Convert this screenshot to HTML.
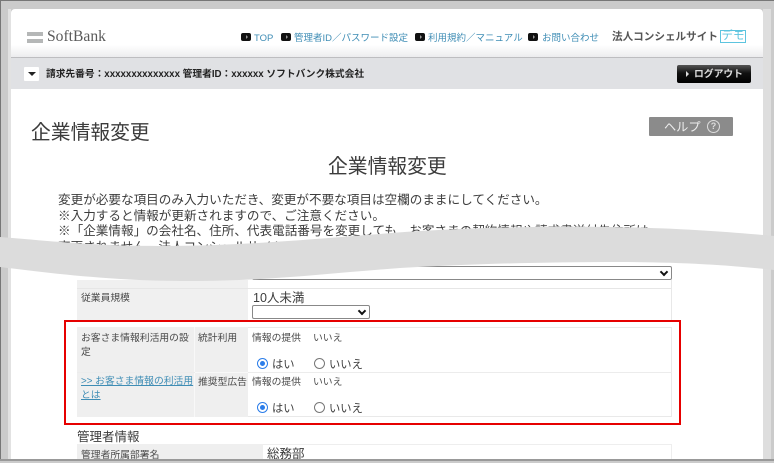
<!DOCTYPE html>
<html lang="ja"><head><meta charset="utf-8"><style>
html,body{margin:0;padding:0}
body{position:relative;width:774px;height:461px;overflow:hidden;background:#cbcbcb;font-family:"Liberation Sans","Noto Sans CJK JP",sans-serif;color:#333}
div,a,span.t{position:absolute;white-space:nowrap}
.nav{top:32px;font-size:9.5px;line-height:14px;color:#3f8db5}
.bul{top:33px;width:10px;height:8px;background:#111;border-radius:2px}
.bul:after{content:"";position:absolute;left:5px;top:2px;border-left:2px solid #999;border-top:2px solid transparent;border-bottom:2px solid transparent}
.p{left:58px;font-size:12.6px;line-height:16px;color:#3c3c3c}
.l{font-size:9.8px;line-height:14px;color:#4a4a4a}
.sel{background:#fff;border:1px solid #888;border-radius:2px;box-sizing:border-box}
.sel:after{content:"";position:absolute;right:4px;top:2px;width:4px;height:4px;border-right:2px solid #111;border-bottom:2px solid #111;transform:rotate(45deg)}
.rad{width:11px;height:11px;border-radius:50%;box-sizing:border-box}
.on{border:1.5px solid #2b7de9;background:#fff}
.on:after{content:"";position:absolute;left:1.5px;top:1.5px;width:5px;height:5px;border-radius:50%;background:#2b7de9}
.off{border:1px solid #777;background:#fff}
.r{font-size:11.3px;line-height:14px;color:#3c3c3c}
</style></head><body>
<div style="left:0;top:0;width:774px;height:1px;background:#777"></div>
<div style="left:0;top:0;width:1px;height:461px;background:#777"></div>
<div style="left:8px;top:9px;width:3px;height:452px;background:#e2e2e2"></div>
<div style="left:763px;top:9px;width:8px;height:452px;background:#dedede"></div>
<div style="left:11px;top:9px;width:752px;height:452px;background:#fff;border-radius:4px 4px 0 0"></div>
<div style="left:11px;top:45px;width:752px;height:12px;background:linear-gradient(#fff,#ececee)"></div>
<div style="left:11px;top:57px;width:752px;height:1px;background:#bdbdc0"></div>
<div style="left:11px;top:58px;width:752px;height:31px;background:#e0e1e4"></div>

<div style="left:27px;top:32px;width:16px;height:4px;background:#b5b7b7"></div>
<div style="left:27px;top:39px;width:16px;height:4px;background:#b5b7b7"></div>
<div style="left:47px;top:27px;font-family:'Liberation Serif',serif;font-size:15.6px;line-height:20px;color:#5a5a5a">SoftBank</div>

<div class="bul" style="left:241px"></div><div class="nav" style="left:254px">TOP</div>
<div class="bul" style="left:281px"></div><div class="nav" style="left:294px">管理者ID／パスワード設定</div>
<div class="bul" style="left:415px"></div><div class="nav" style="left:428px">利用規約／マニュアル</div>
<div class="bul" style="left:528px"></div><div class="nav" style="left:542px">お問い合わせ</div>
<div style="left:612px;top:30px;font-size:10.6px;line-height:15px;font-weight:700;color:#555">法人コンシェルサイト</div>
<div style="left:720px;top:30px;width:26px;height:13px;box-sizing:border-box;border:1.5px solid #5cc4df;font-size:11.5px;line-height:10px;text-align:center;color:#5cc4df">デモ</div>

<div style="left:24px;top:67px;width:15px;height:14px;background:#fff;border-radius:1px"></div>
<div style="left:28px;top:72px;border-top:4px solid #222;border-left:4px solid transparent;border-right:4px solid transparent"></div>
<div style="left:46px;top:68px;font-size:9.72px;line-height:14px;font-weight:700;color:#222">請求先番号：xxxxxxxxxxxxxx 管理者ID：xxxxxx ソフトバンク株式会社</div>
<div style="left:677px;top:65px;width:74px;height:18px;border-radius:2px;background:linear-gradient(#555,#111 45%,#000)"></div>
<div style="left:686px;top:71px;border-left:3px solid #ddd;border-top:3px solid transparent;border-bottom:3px solid transparent"></div>
<div style="left:694px;top:68px;font-size:9.8px;line-height:14px;font-weight:700;color:#ddd">ログアウト</div>

<div style="left:31px;top:119px;font-size:19.8px;line-height:28px;color:#3c3c3c">企業情報変更</div>
<div style="left:649px;top:117px;width:84px;height:19px;background:#8b8b8b;border-radius:1px"></div>
<div style="left:664px;top:120px;font-size:12.2px;line-height:15px;color:#eee">ヘルプ</div>
<div style="left:707px;top:120px;width:13px;height:13px;box-sizing:border-box;border:1.5px solid #ddd;border-radius:50%;font-size:9px;line-height:10px;font-weight:700;text-align:center;color:#ddd">?</div>

<div style="left:328px;top:153px;font-size:19.8px;line-height:28px;color:#3c3c3c">企業情報変更</div>
<div class="p" style="top:192px">変更が必要な項目のみ入力いただき、変更が不要な項目は空欄のままにしてください。</div>
<div class="p" style="top:208px">※入力すると情報が更新されますので、ご注意ください。</div>
<div class="p" style="top:223px">※「企業情報」の会社名、住所、代表電話番号を変更しても、お客さまの契約情報や請求書送付先住所は</div>
<div class="p" style="top:239px">変更されません。法人コンシェルサイトから</div>

<!-- table top -->
<div style="left:77px;top:280px;width:171px;height:40px;background:#f0f0f0"></div>
<div style="left:77px;top:288px;width:595px;height:1px;background:#e6e6e6"></div>
<div style="left:671px;top:280px;width:1px;height:40px;background:#e8e8e8"></div>
<div class="sel" style="left:252px;top:266px;width:420px;height:14px"></div>
<div class="l" style="left:81px;top:292px">従業員規模</div>
<div style="left:253px;top:290px;font-size:12.5px;line-height:16px;color:#3c3c3c">10人未満</div>
<div class="sel" style="left:252px;top:305px;width:118px;height:14px"></div>

<!-- red section -->
<div style="left:77px;top:327px;width:595px;height:90px;box-sizing:border-box;background:#fff;border:1px solid #e9e9e9"></div>
<div style="left:77px;top:327px;width:171px;height:90px;background:#efefef"></div>
<div style="left:194px;top:327px;width:1px;height:90px;background:#f8f8f8"></div>
<div style="left:77px;top:372px;width:595px;height:1px;background:#ececec"></div>
<div style="left:195px;top:372px;width:53px;height:1px;background:#f8f8f8"></div>
<div style="left:64px;top:320px;width:617px;height:105px;box-sizing:border-box;border:2px solid #e60000"></div>
<div class="l" style="left:81px;top:332px;width:113px;white-space:normal">お客さま情報利活用の設定</div>
<div class="l" style="left:81px;top:375px;width:113px;white-space:normal;color:#3f8db5;text-decoration:underline">&gt;&gt; お客さま情報の利活用とは</div>
<div class="l" style="left:198px;top:332px">統計利用</div>
<div class="l" style="left:198px;top:376px">推奨型広告</div>
<div class="l" style="left:252px;top:332px">情報の提供</div><div class="l" style="left:313px;top:332px">いいえ</div>
<div class="l" style="left:252px;top:376px">情報の提供</div><div class="l" style="left:313px;top:376px">いいえ</div>
<div class="rad on" style="left:257px;top:358px"></div><div class="r" style="left:272px;top:358px">はい</div>
<div class="rad off" style="left:314px;top:358px"></div><div class="r" style="left:329px;top:358px">いいえ</div>
<div class="rad on" style="left:257px;top:402px"></div><div class="r" style="left:272px;top:402px">はい</div>
<div class="rad off" style="left:314px;top:402px"></div><div class="r" style="left:329px;top:402px">いいえ</div>

<!-- admin -->
<div style="left:77px;top:429px;font-size:12.5px;line-height:16px;color:#3c3c3c">管理者情報</div>
<div style="left:77px;top:444px;width:595px;height:15px;box-sizing:border-box;border:1px solid #eee;border-bottom:0"></div>
<div style="left:77px;top:444px;width:186px;height:15px;background:#efefef"></div>
<div class="l" style="left:81px;top:449px">管理者所属部署名</div>
<div style="left:267px;top:446px;font-size:12.5px;line-height:16px;color:#3c3c3c">総務部</div>

<div style="left:0;top:459px;width:774px;height:2px;background:#999"></div>

<svg style="position:absolute;left:0;top:0" width="774" height="461"><path d="M0 237C50 241 95 246 160 246C240 246 300 240 380 234C450 228 530 226 610 227C680 228 730 232 774 236L774 270C730 265 680 262 620 262C540 262 470 264 400 268C330 273 270 281 190 281C110 281 50 273 0 267Z" fill="#dcdcdc"/></svg>
</body></html>
